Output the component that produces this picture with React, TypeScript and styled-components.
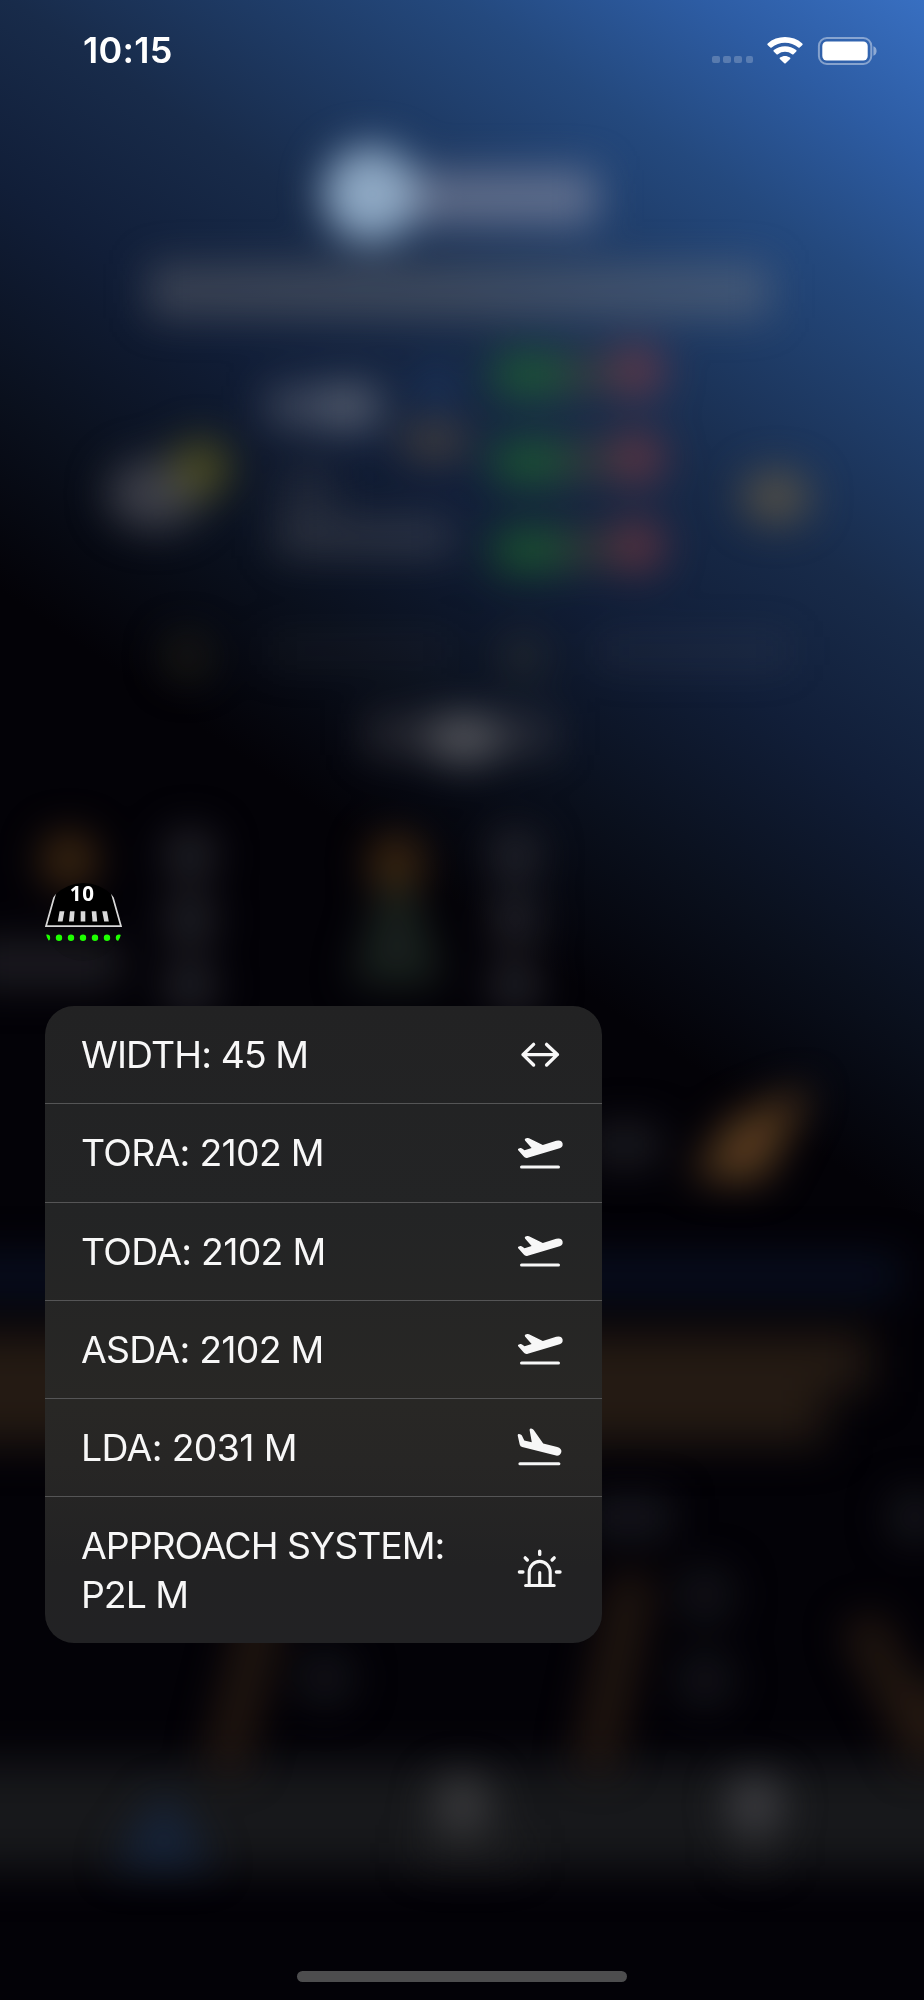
import React from "react";
import styled, { createGlobalStyle } from "styled-components";

const GlobalStyle = createGlobalStyle`
  body { margin: 0; background: #030207; }
  * { box-sizing: border-box; }
`;

const Screen = styled.main`
  position: relative;
  display: flex;
  flex-direction: column;
  width: 924px;
  height: 2000px;
  overflow: hidden;
  color: #f7f7f7;
  font-family: Inter, "Liberation Sans", sans-serif;
  background: linear-gradient(
    214.5deg,
    #386fc1 0px,
    #2d5ca3 130px,
    #24497e 264px,
    #182b4a 518px,
    #111e38 674px,
    #0a101d 850px,
    #030207 1010px
  );
`;

const Backdrop = styled.svg`
  position: absolute;
  inset: 0;
`;

const StatusBar = styled.header`
  position: relative;
  display: flex;
  align-items: center;
  justify-content: space-between;
  height: 101px;
  padding: 0 47px 0 83px;
`;

const Clock = styled.time`
  font-size: 36px;
  font-weight: 600;
  letter-spacing: 0.3px;
  line-height: 44px;
  padding-bottom: 1px;
  color: #fff;
`;

const StatusIcons = styled.div`
  display: flex;
  align-items: center;
  gap: 14px;
`;

const Signal = styled.div`
  display: flex;
  gap: 3.6px;
  padding-top: 18px;
`;

const SignalDot = styled.i`
  width: 7.5px;
  height: 7.5px;
  border-radius: 2px;
  background: rgba(255, 255, 255, 0.22);
`;

const Glyph = styled.svg`
  display: block;
  flex: none;
  overflow: visible;
`;

const Content = styled.section`
  position: relative;
  display: flex;
  flex: 1;
  flex-direction: column;
  align-items: flex-start;
  padding: 782px 0 0 45px;
`;

const Menu = styled.ul`
  display: flex;
  flex-direction: column;
  width: 557px;
  height: 637px;
  margin: 43px 0 0;
  padding: 0;
  list-style: none;
  border-radius: 29px;
  overflow: hidden;
  background: linear-gradient(#222223, #232425 32%, #282725 62%, #272625 72%, #222223 88%, #222224);
`;

const MenuItem = styled.li<{ $lines: number }>`
  display: flex;
  align-items: center;
  justify-content: space-between;
  height: ${(p) => (p.$lines > 1 ? 145.7 : 98.26)}px;
  padding: 0 37px 0 36px;
  border-bottom: 1.5px solid #555556;
  &:last-child { border-bottom: 0; }
`;

const Label = styled.span<{ $tracking: number }>`
  font-size: 37.4px;
  line-height: 49px;
  white-space: pre-line;
  letter-spacing: ${(p) => p.$tracking}px;
`;

const HomeIndicator = styled.div`
  position: relative;
  width: 330px;
  height: 11px;
  margin: 0 auto 18px;
  border-radius: 6px;
  background: #4d4d4e;
`;

const WidthIcon = () => (
  <Glyph width="50" height="50" fill="none" stroke="#f7f7f7" strokeWidth="3.4" strokeLinecap="round" strokeLinejoin="round">
    <path d="M8 24.6H42.5M18.6 14.4L8 24.6L18.6 35M31.6 14.4L42.3 24.6L31.6 35" />
  </Glyph>
);

const TakeoffIcon = () => (
  <Glyph width="50" height="50" fill="#f7f7f7">
    <path d="M3 22.1Q2.6 20.8 3.9 20.4L5.4 20.1Q6.4 19.9 7 20.4L9.6 22.3L16.6 20L10 12.4Q9.3 11.1 10.5 10.6L12.2 10Q13.2 9.8 14 10.2L27.8 16.9L41.2 12.7Q46.6 11.4 47.6 15.4Q48.2 19 44.6 20.2L12.8 29.7Q10.2 30.4 8.5 28.3Z" />
    <rect x="5" y="37.5" width="40" height="3" rx="1.5" />
  </Glyph>
);

const LandingIcon = () => (
  <Glyph width="50" height="50" fill="#f7f7f7">
    <path d="M2.7 12.4Q2.7 10.9 4.1 11.1L5.6 11.4Q6.6 11.7 6.9 12.6L9.3 17.6L16.8 19.2L14.6 7.1Q14.5 5.3 16.1 5.6L17.5 6Q18.3 6.3 18.9 7.2L28.2 20.5L42.2 24Q46.8 25.4 46.4 29Q45.2 33.2 41 32.6L7.2 24.1Q5.2 23.4 4.7 21.4Z" />
    <rect x="3.4" y="39.2" width="42" height="3" rx="1.5" />
  </Glyph>
);

const BeaconIcon = () => (
  <Glyph width="50" height="50" fill="none" stroke="#f7f7f7" strokeWidth="3.1" strokeLinecap="round">
    <path d="M14.2 40V27.2A10.5 10.8 0 0 1 35.2 27.2V40M24.7 27.5V40M10.6 40.5H39.2" />
    <path d="M24.7 6.2V9.4M4.4 27H7.9M41.4 27H45M10.2 12.9L12.3 15M39.2 12.9L37.1 15" strokeWidth="3.4" />
  </Glyph>
);

const Runway = () => (
  <Glyph width="77" height="80" viewBox="45 883 77 80">
    <defs>
      <clipPath id="threshold"><circle cx="83.5" cy="922.5" r="39.5" /></clipPath>
    </defs>
    <circle cx="83.5" cy="922.5" r="38.5" fill="#0c0c10" opacity=".15" />
    <g clipPath="url(#threshold)">
      <path d="M59 880L46 926.2H121L108 880Z" fill="#000" stroke="#d9d9d9" strokeWidth="1.7" />
      <path d="M59.6 911.2H64.4L62.6 921.6H57.8ZM70 911.2H74.6L73.8 921.6H69ZM80.7 911.2H85.3V921.6H80.7ZM91.7 911.2H96.3L97.2 921.6H92.5ZM102.2 911.2H107L108.8 921.6H104.2Z" fill="#d9d9d9" />
      {[47, 59, 71, 83, 95, 107, 119].map((x) => (
        <circle key={x} cx={x} cy="937.7" r="3.2" fill="#1eff00" />
      ))}
    </g>
    <text x="82.2" y="901.4" textAnchor="middle" fontFamily="'Noto Sans', sans-serif" fontWeight="700" fontSize="20.5" letterSpacing=".8" fill="#fff">10</text>
  </Glyph>
);

const ROWS = [
  { text: "WIDTH: 45 M", Icon: WidthIcon, tracking: -0.9 },
  { text: "TORA: 2102 M", Icon: TakeoffIcon, tracking: -0.72 },
  { text: "TODA: 2102 M", Icon: TakeoffIcon, tracking: -0.72 },
  { text: "ASDA: 2102 M", Icon: TakeoffIcon, tracking: -0.72 },
  { text: "LDA: 2031 M", Icon: LandingIcon, tracking: -0.65 },
  { text: "APPROACH SYSTEM:\nP2L M", Icon: BeaconIcon, tracking: -1.02 },
];

const BlurredPage = () => (
  <Backdrop width="924" height="2000" aria-hidden="true">
    <defs>
      <filter id="soft" filterUnits="userSpaceOnUse" x="-100" y="0" width="1124" height="2000" colorInterpolationFilters="sRGB">
        <feGaussianBlur stdDeviation="20" />
      </filter>
      <filter id="wide" filterUnits="userSpaceOnUse" x="-100" y="0" width="1124" height="2000" colorInterpolationFilters="sRGB">
        <feGaussianBlur stdDeviation="22" />
      </filter>
    </defs>
    <g filter="url(#wide)">
      <rect x="-80" y="1258" width="980" height="36" fill="#091024" />
      <rect x="-80" y="1332" width="905" height="112" fill="#241a13" />
      <rect x="800" y="1332" width="70" height="60" fill="#241a13" />
      <rect x="-80" y="1762" width="1100" height="108" fill="#17181b" />
    </g>
    <g filter="url(#soft)">
      <circle cx="371" cy="194" r="48" fill="#8fa9c4" />
      <rect x="415" y="170" width="182" height="56" fill="#8b8fa5" opacity=".6" />
      <rect x="148" y="264" width="622" height="54" fill="#8b8a86" opacity=".33" />
      {[375, 462, 550].map((y) => (
        <g key={y}>
          <rect x="494" y={y - 21} width="70" height="42" fill="#1f6a2c" opacity=".68" />
          <rect x="564" y={y - 20} width="46" height="38" fill="#4f4b36" opacity=".55" />
          <circle cx="637" cy={y - 4} r="27" fill="#8a3c3f" opacity=".6" />
        </g>
      ))}
      <rect x="266" y="386" width="62" height="42" fill="#828792" opacity=".38" />
      <rect x="322" y="384" width="58" height="46" fill="#828792" opacity=".55" />
      <circle cx="436" cy="388" r="20" fill="#2c5390" opacity=".35" />
      <rect x="403" y="424" width="62" height="34" fill="#6b5740" opacity=".55" />
      <rect x="280" y="466" width="56" height="50" fill="#55545a" opacity=".25" />
      <rect x="276" y="518" width="176" height="38" fill="#6b6a70" opacity=".33" />
      <ellipse cx="155" cy="494" rx="48" ry="36" fill="#54545d" opacity=".68" />
      <circle cx="201" cy="468" r="30" fill="#69651c" opacity=".62" />
      <ellipse cx="776" cy="497" rx="35" ry="27" fill="#746340" opacity=".62" />
      <circle cx="187" cy="657" r="25" fill="#3d3a20" opacity=".35" />
      <circle cx="523" cy="657" r="24" fill="#5a573a" opacity=".25" />
      <rect x="265" y="634" width="190" height="34" fill="#504b4b" opacity=".13" />
      <rect x="595" y="634" width="195" height="34" fill="#61646e" opacity=".13" />
      <rect x="365" y="714" width="190" height="42" fill="#5d5b61" opacity=".34" />
      <ellipse cx="464" cy="739" rx="38" ry="26" fill="#76767a" opacity=".58" />
      <circle cx="69" cy="860" r="28" fill="#654019" opacity=".62" />
      <circle cx="396" cy="863" r="28" fill="#654019" opacity=".62" />
      <path d="M380 888H414L444 985H350Z" fill="#27332b" opacity=".62" />
      {[190, 515].map((x) => (
        <g key={x} fill="#34353c" opacity=".62">
          <circle cx={x} cy="855" r="27" />
          <circle cx={x} cy="920" r="27" />
          <circle cx={x} cy="986" r="27" />
        </g>
      ))}
      <rect x="-30" y="942" width="150" height="44" fill="#27262c" opacity=".75" />
      <rect x="590" y="1124" width="70" height="42" fill="#2a2a31" opacity=".6" />
      <path d="M692 1178L730 1120L812 1086L784 1138L762 1182Z" fill="#7a5228" opacity=".72" />
      <rect x="590" y="1498" width="80" height="38" fill="#18181f" />
      <circle cx="915" cy="1517" r="26" fill="#16161c" />
      <circle cx="705" cy="1595" r="28" fill="#131319" />
      <circle cx="705" cy="1680" r="28" fill="#131319" />
      <circle cx="325" cy="1678" r="28" fill="#131319" />
      <path d="M266 1600L224 1768M634 1575L594 1768M860 1620L930 1760" stroke="#382517" strokeWidth="40" opacity=".64" />
      <path d="M910 1680H960V1760H920Z" fill="#2a1e14" opacity=".7" />
      <path d="M165 1790L215 1868H110Z" fill="#16294a" opacity=".65" />
      <circle cx="462" cy="1805" r="30" fill="#414143" opacity=".8" />
      <circle cx="755" cy="1805" r="29" fill="#414146" opacity=".9" />
      <rect x="415" y="1838" width="110" height="30" fill="#2d2d2f" opacity=".35" />
      <rect x="730" y="1838" width="50" height="30" fill="#2d2d2f" opacity=".35" />
    </g>
  </Backdrop>
);

export default function App() {
  return (
    <>
      <GlobalStyle />
      <Screen>
        <BlurredPage />
        <StatusBar>
          <Clock>10:15</Clock>
          <StatusIcons>
            <Signal>
              <SignalDot />
              <SignalDot />
              <SignalDot />
              <SignalDot />
            </Signal>
            <Glyph width="36" height="27" fill="#fff">
              <path d="M.6 7.9Q-.1 7.1.7 6.4C10.2-2.1 25.8-2.1 35.3 6.4Q36.1 7.1 35.4 7.9L32.7 10.5Q32 11.1 31.3 10.5C24 4 12 4 4.7 10.5Q4 11.1 3.3 10.5Z" />
              <path d="M6.7 14.5Q6 13.8 6.8 13.1C13 7.8 23 7.8 29.2 13.1Q30 13.8 29.3 14.5L26.5 17.2Q25.8 17.8 25.1 17.2C21 13.9 15 13.9 10.9 17.2Q10.2 17.8 9.5 17.2Z" />
              <path d="M12.9 21.9Q12.1 21.1 13 20.5C16 18.4 20 18.4 23 20.5Q23.9 21.1 23.1 21.9L18.7 26.2Q18 26.9 17.3 26.2Z" />
            </Glyph>
            <Glyph width="60" height="28" fill="none">
              <rect x="1.9" y="1" width="52.4" height="26" rx="8" stroke="#fff" strokeOpacity=".42" strokeWidth="2" />
              <rect x="5.3" y="4.4" width="45.4" height="19.2" rx="4.5" fill="#fff" />
              <path d="M56.4 9.2Q59.6 10.5 59.6 14Q59.6 17.5 56.4 18.8Z" fill="#fff" fillOpacity=".45" />
            </Glyph>
          </StatusIcons>
        </StatusBar>
        <Content>
          <Runway />
          <Menu>
            {ROWS.map(({ text, Icon, tracking }) => (
              <MenuItem key={text} $lines={text.split("\n").length}>
                <Label $tracking={tracking}>{text}</Label>
                <Icon />
              </MenuItem>
            ))}
          </Menu>
        </Content>
        <HomeIndicator />
      </Screen>
    </>
  );
}
